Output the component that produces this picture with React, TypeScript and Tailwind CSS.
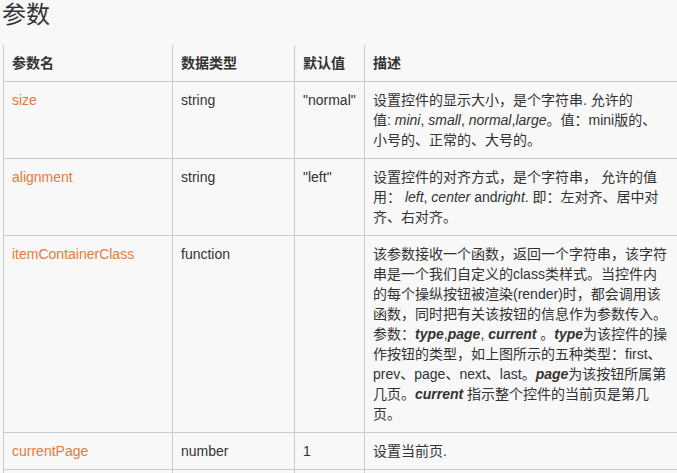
import React from "react";

const FONT = '"Liberation Sans", Arial, "Noto Sans CJK SC", sans-serif';

const cell = "border-l border-[#cccccc] px-2 py-2 leading-5";
const rowCell = "border-l border-t border-[#cccccc] px-2 py-2 leading-5";

function BI({ children }: { children: React.ReactNode }) {
  return <b className="font-bold italic">{children}</b>;
}
function I({ children }: { children: React.ReactNode }) {
  return <i className="italic">{children}</i>;
}

type Row = { name: string; type: string; def: string; desc: React.ReactNode[] };

const rows: Row[] = [
  {
    name: "size",
    type: "string",
    def: '"normal"',
    desc: [
      <>设置控件的显示大小，是个字符串. 允许的</>,
      <>
        值: <I>mini</I>, <I>small</I>, <I>normal</I>,<I>large</I>。值：mini版的、
      </>,
      <>小号的、正常的、大号的。</>,
    ],
  },
  {
    name: "alignment",
    type: "string",
    def: '"left"',
    desc: [
      <>设置控件的对齐方式，是个字符串， 允许的值</>,
      <>
        用： <I>left</I>, <I>center</I> and<I>right</I>. 即：左对齐、居中对
      </>,
      <>齐、右对齐。</>,
    ],
  },
  {
    name: "itemContainerClass",
    type: "function",
    def: "",
    desc: [
      <>该参数接收一个函数，返回一个字符串，该字符</>,
      <>串是一个我们自定义的class类样式。当控件内</>,
      <>的每个操纵按钮被渲染(render)时，都会调用该</>,
      <>函数，同时把有关该按钮的信息作为参数传入。</>,
      <>
        参数：<BI>type</BI>,<BI>page</BI>, <BI>current</BI> 。<BI>type</BI>为该控件的操
      </>,
      <>作按钮的类型，如上图所示的五种类型：first、</>,
      <>
        prev、page、next、last。<BI>page</BI>为该按钮所属第
      </>,
      <>
        几页。<BI>current</BI> 指示整个控件的当前页是第几
      </>,
      <>页。</>,
    ],
  },
  {
    name: "currentPage",
    type: "number",
    def: "1",
    desc: [<>设置当前页.</>],
  },
];

export default function App() {
  return (
    <div
      className="w-[677px] h-[473px] overflow-hidden bg-[#f8f8f8] text-[#333333]"
      style={{ fontFamily: FONT }}
    >
      <h2 className="pl-[2px] pt-[1px] text-[24px] leading-[28px] font-normal text-[#333333]">
        参数
      </h2>
      <div className="mt-[16px] pl-[3px]">
        <div className="grid grid-cols-[169px_122px_70px_330px] w-[691px] text-[14px]">
          <div className={cell + " font-bold"}>参数名</div>
          <div className={cell + " font-bold"}>数据类型</div>
          <div className={cell + " font-bold"}>默认值</div>
          <div className={cell + " font-bold"}>描述</div>
          {rows.map((r) => (
            <React.Fragment key={r.name}>
              <div className={rowCell + " text-[#e97a3a]"}>{r.name}</div>
              <div className={rowCell}>{r.type}</div>
              <div className={rowCell}>{r.def}</div>
              <div className={rowCell}>
                {r.desc.map((d, i) => (
                  <div key={i} className="whitespace-nowrap">
                    {d}
                  </div>
                ))}
              </div>
            </React.Fragment>
          ))}
          <div className={rowCell + " h-9"}></div>
          <div className={rowCell + " h-9"}></div>
          <div className={rowCell + " h-9"}></div>
          <div className={rowCell + " h-9"}></div>
        </div>
      </div>
    </div>
  );
}
